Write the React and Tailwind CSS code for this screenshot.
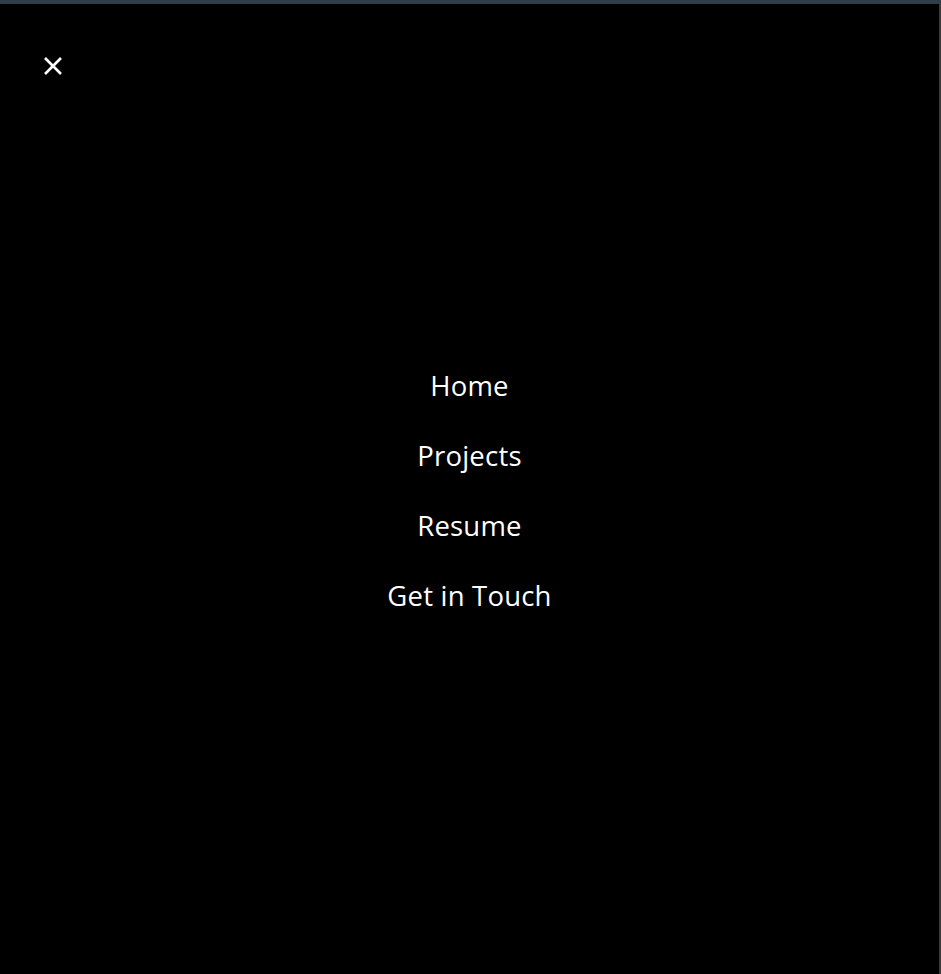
import React from 'react';

const links = ['Home', 'Projects', 'Resume', 'Get in Touch'];

const App = () => {
    return (
        <div className="h-[974px] w-full bg-black flex flex-col" style={{ fontFamily: '"Open Sans", "Noto Sans", sans-serif' }}>
            {/* top strip */}
            <div className="h-[4px] bg-[#2f3e48] shrink-0"></div>
            <div className="flex flex-1 min-h-0">
                <div className="relative flex-1 flex flex-col items-center justify-center">
                    {/* close button */}
                    <button className="absolute left-[44px] top-[53px] w-[18px] h-[18px] flex items-center justify-center">
                        <svg viewBox="0 0 18 18" className="w-[18px] h-[18px]" fill="none" stroke="white" strokeWidth="2.6" strokeLinecap="butt">
                            <path d="M1 1 L17 17 M17 1 L1 17" />
                        </svg>
                    </button>
                    <nav className="flex flex-col items-center gap-[34px] pt-[4px]">
                        {links.map((l) => (
                            <a key={l} href="#" className="text-white text-[27.5px] leading-[36px] tracking-[0.2px]">{l}</a>
                        ))}
                    </nav>
                </div>
                <div className="w-[2px] bg-[#3a3a3a] shrink-0"></div>
            </div>
        </div>
    );
};

export default App;
